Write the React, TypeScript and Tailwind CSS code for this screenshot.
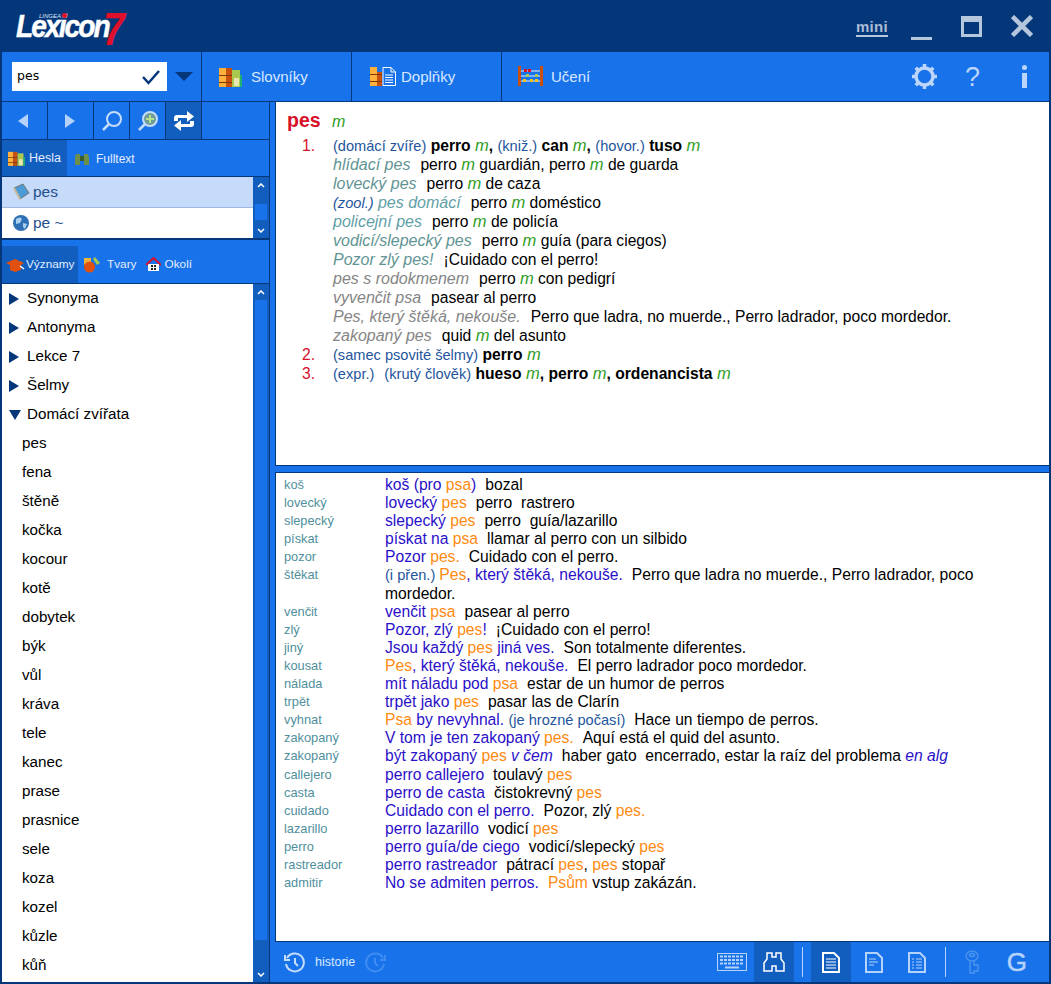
// Lexicon 7 dictionary window
import type { ReactNode } from "react";

const tree = ["pes", "fena", "štěně", "kočka", "kocour", "kotě", "dobytek", "býk", "vůl", "kráva", "tele", "kanec", "prase", "prasnice", "sele", "koza", "kozel", "kůzle", "kůň"];

function M() {
	return <i className="text-[16.500px] text-[#2f9e1f]">m</i>;
}

function Books({ small }: { small?: boolean }) {
	return (
		<svg width={small ? 17 : 23} height={small ? 15 : 20} viewBox="0 0 23 20">
			<rect x="0" y="1" width="7" height="19" fill="#ffb03a" />
			<rect x="7" y="1" width="6" height="19" fill="#c9500f" />
			<rect x="0" y="8" width="13" height="1" fill="#7a3a0a" />
			<rect x="0" y="15" width="13" height="1" fill="#7a3a0a" />
			<rect x="13" y="3" width="8" height="17" fill="#a8c84e" />
			<rect x="15" y="11" width="5" height="8" fill="#e8e8b0" />
			<rect x="21" y="8" width="2" height="12" fill="#1eb070" />
		</svg>
	);
}

function BooksDoc() {
	return (
		<svg width="26" height="20" viewBox="0 0 26 20">
			<rect x="0" y="0" width="7" height="19" fill="#ffb03a" />
			<rect x="7" y="5" width="5" height="14" fill="#c9500f" />
			<rect x="0" y="7" width="12" height="1" fill="#7a3a0a" />
			<rect x="0" y="14" width="12" height="1" fill="#7a3a0a" />
			<path d="M13 .5h8l4.500 4.500V18.500H13z" fill="#1873eb" stroke="#fff" />
			<path d="M21 .5V5h4.500" fill="none" stroke="#fff" />
			<path d="M15 8h8M15 10.500h8M15 13h8M15 15.500h8" stroke="#fff" />
		</svg>
	);
}

function Abacus() {
	return (
		<svg width="26" height="21" viewBox="0 0 26 21">
			<rect x="0" y="0" width="3" height="20" fill="#c9500f" />
			<rect x="22" y="0" width="3" height="20" fill="#c9500f" />
			<path d="M3 5h19M3 10h19M3 15h19" stroke="#e8f0ff" />
			<rect x="6" y="3" width="3" height="3" fill="#e0102a" />
			<rect x="10" y="3" width="3" height="3" fill="#e0102a" />
			<rect x="8" y="8" width="3" height="3" fill="#a8c84e" />
			<rect x="17" y="8" width="3" height="3" fill="#a8c84e" />
			<rect x="5" y="13" width="3" height="3" fill="#f5c518" />
			<rect x="12" y="13" width="3" height="3" fill="#f5c518" />
			<rect x="17" y="13" width="3" height="3" fill="#f5c518" />
		</svg>
	);
}

function Magnifier({ plus }: { plus?: boolean }) {
	return (
		<svg width="22" height="22" viewBox="0 0 22 22" fill="none">
			<circle cx="13" cy="9" r="7" stroke="#c5dcfb" strokeWidth="2" fill={plus ? "#6f9e9a" : "none"} />
			<path d="M8 14l-6 6" stroke="#c5dcfb" strokeWidth="2.500" />
			{plus && <path d="M13 5v8M9 9h8" stroke="#b8e08a" strokeWidth="2" />}
		</svg>
	);
}

function Repeat() {
	return (
		<svg width="20" height="20" viewBox="0 0 20 20" fill="#fff">
			<path d="M0 10V7a3 3 0 0 1 3-3h10V0l7 5.500L13 11V7H4v3z" />
			<path d="M20 10v3a3 3 0 0 1-3 3H7v4L0 14.500 7 9v4h9v-3z" />
		</svg>
	);
}

function ScrollBtn({ down }: { down?: boolean }) {
	return (
		<div className="h-[16px] flex items-center justify-center bg-[#115ebf]">
			<svg width="8" height="5" viewBox="0 0 8 5" fill="none" className={down ? "" : "rotate-180"}>
				<path d="M1 1l3 3 3-3" stroke="#fff" strokeWidth="1.500" />
			</svg>
		</div>
	);
}

function Scrollbar({ thumbTop, thumbHeight }: { thumbTop: number; thumbHeight: number }) {
	return (
		<div className="w-[16px] shrink-0 bg-[#115ebf] flex flex-col justify-between">
			<ScrollBtn />
			<div className="flex-1 px-[2px]" style={{ paddingTop: thumbTop }}>
				<div className="bg-[#1873eb]" style={{ height: thumbHeight }} />
			</div>
			<ScrollBtn down />
		</div>
	);
}

function TopTab({ icon, label, last }: { icon: ReactNode; label: string; last?: boolean }) {
	return (
		<div className={`w-[150px] h-full flex items-center pl-[16px] ${last ? "" : "border-r border-[#04367a]"}`}>
			<div className="w-[33px] flex items-center">{icon}</div>
			<span className="text-[15px] mt-[2px] text-[#d8e8ff]">{label}</span>
		</div>
	);
}

function NavBtn({ w, active, children }: { w: string; active?: boolean; children: ReactNode }) {
	return <div className={`${w} h-full flex items-center justify-center border-r border-[#04367a] ${active ? "bg-[#115ebf]" : ""}`}>{children}</div>;
}

function Row({ label, children }: { label: string; children: ReactNode }) {
	return (
		<div className="flex leading-[18.100px]">
			<div className="w-[101px] shrink-0 text-[12.800px] text-[#4f8f9c]">{label}</div>
			<div className="flex-1 text-black">{children}</div>
		</div>
	);
}

function B({ children }: { children: ReactNode }) {
	return <span className="text-[#2a10c8]">{children}</span>;
}
function O({ children }: { children: ReactNode }) {
	return <span className="text-[#ff8a10]">{children}</span>;
}
function Tr({ children }: { children: ReactNode }) {
	return <span className="ml-[9px]">{children}</span>;
}
function Sub({ color, text, children }: { color: string; text: string; children: ReactNode }) {
	return (
		<div className="h-[19px]">
			<i className={`text-[16px] ${color}`}>{text}</i>
			<span className="ml-[10px]">{children}</span>
		</div>
	);
}
function Note({ children }: { children: ReactNode }) {
	return <span className="text-[14.600px] text-[#24559c]">{children}</span>;
}
function Num({ n }: { n: string }) {
	return <div className="w-[46px] pl-[15px] shrink-0 text-[#d8102a]">{n}</div>;
}

function Doc({ lines, stroke }: { lines: string; stroke: string }) {
	return (
		<svg width="18" height="21" viewBox="0 0 18 21" fill="none">
			<path d="M1 1h11l5 5v14H1z" stroke={stroke} strokeWidth="2" />
			<path d={lines} stroke={stroke} strokeWidth="1.200" />
		</svg>
	);
}

export default function App() {
	return (
		<div className="w-[1051px] h-[984px] flex flex-col overflow-hidden bg-[#04367a] font-['Liberation_Sans',sans-serif] text-[15.650px]">
			{/* Title bar */}
			<div className="h-[52px] shrink-0 flex items-center pl-[16px] pr-[18px] text-[#b5c7dc]">
				<div className="relative w-[118px] h-[36px] text-white italic font-bold">
					<span className="absolute left-0 top-[5px] text-[32px] leading-[26px] tracking-[-2.200px] origin-left scale-x-[0.88] [-webkit-text-stroke:0.5px_white]">Lexicon</span>
					<span className="absolute left-[23px] top-[5px] text-[6px] leading-[6px] font-normal text-[#dfe7f2]">LINGEA</span>
					<span className="absolute left-[46px] top-[5px] size-[5px] rounded-full bg-[#e0102a]" />
					<span className="absolute left-[87px] top-[-2px] text-[46px] leading-[46px] origin-left scale-x-[0.85] text-[#e0102a]">7</span>
				</div>
				<div className="flex-1" />
				<span className="text-[15px] leading-[17px] tracking-[0.300px] font-bold border-b-2 border-[#b5c7dc] mr-[23px] mt-[2px] text-[#a9bdd6]">mini</span>
				<div className="w-[21px] h-[3px] bg-[#b5c7dc] mt-[24px] mr-[29px]" />
				<div className="size-[21px] border-[3px] border-t-[6px] border-[#b5c7dc] mr-[29px]" />
				<svg width="22" height="22" viewBox="0 0 22 22" stroke="#b5c7dc" strokeWidth="4.500"><path d="M1.500 1.500l19 19M20.500 1.500l-19 19" /></svg>
			</div>

			{/* Main toolbar */}
			<div className="h-[50px] shrink-0 ml-[2px] mr-[2px] flex items-center bg-[#1873eb] border-b border-[#04367a]">
				<div className="w-[200px] h-full border-r border-[#04367a] flex items-center pl-[10px]">
					<div className="w-[155px] h-[29px] bg-white flex items-center justify-between pl-[5px] pr-[6px]">
						<span className="text-[12.500px] font-['DejaVu_Sans',sans-serif] text-black">pes</span>
						<svg width="20" height="16" viewBox="0 0 20 16" fill="none"><path d="M2 8l5.500 6L18 2" stroke="#04367a" strokeWidth="2.500" /></svg>
					</div>
					<svg width="18" height="9" viewBox="0 0 18 9" className="ml-[8px]"><path d="M0 0h18L9 9z" fill="#04367a" /></svg>
				</div>
				<TopTab icon={<span className="ml-px"><Books /></span>} label="Slovníky" />
				<TopTab icon={<span className="ml-[2px]"><BooksDoc /></span>} label="Doplňky" />
				<TopTab icon={<Abacus />} label="Učení" last />
				<div className="flex-1 flex items-center justify-end pr-[22px] text-[#bcd6fb]">
					<svg width="25" height="25" viewBox="0 0 25 25" fill="none" className="mr-[28px]">
						<circle cx="12.500" cy="12.500" r="8.500" stroke="#bcd6fb" strokeWidth="3.500" />
						<path d="M12.500 0v4M12.500 21v4M0 12.500h4M21 12.500h4M3.700 3.700l2.800 2.800M18.500 18.500l2.800 2.800M21.300 3.700l-2.800 2.800M6.500 18.500l-2.800 2.800" stroke="#bcd6fb" strokeWidth="3.500" />
					</svg>
					<span className="text-[27px] leading-[26px] mr-[42px]">?</span>
					<div className="flex flex-col items-center gap-[3px]">
						<div className="size-[5px] rounded-full bg-[#bcd6fb]" />
						<div className="w-[5px] h-[15px] bg-[#bcd6fb]" />
					</div>
				</div>
			</div>

			{/* Body */}
			<div className="flex-1 min-h-0 ml-[2px] mr-[2px] mb-[2px] flex bg-[#1873eb]">
				{/* Left column */}
				<div className="w-[268px] shrink-0 flex flex-col border-r border-[#04367a]">
					<div className="h-[38px] shrink-0 flex items-center border-b border-[#04367a]">
						<NavBtn w="w-[46px]"><svg width="12" height="14" viewBox="0 0 12 14" className="-ml-[3px]"><path d="M11 0v14L1 7z" fill="#b5d2fa" /></svg></NavBtn>
						<NavBtn w="w-[46px]"><svg width="12" height="14" viewBox="0 0 12 14"><path d="M0 0v14l10-7z" fill="#b5d2fa" /></svg></NavBtn>
						<NavBtn w="w-[36px]"><Magnifier /></NavBtn>
						<NavBtn w="w-[36px]"><Magnifier plus /></NavBtn>
						<NavBtn w="w-[36px]" active><Repeat /></NavBtn>
					</div>
					<div className="h-[37px] shrink-0 flex items-center border-b border-[#04367a] text-[12px] text-[#e4eeff]">
						<div className="w-[65px] h-full bg-[#115ebf] flex items-center pl-[6px] gap-[4px]"><Books small /><span className="text-[12.500px] mt-px">Hesla</span></div>
						<div className="flex items-center pl-[8px] gap-[7px]">
							<svg width="14" height="14" viewBox="0 0 14 14" fill="#6d8f4a"><path d="M1 3h4v11H0V6zM9 3h4l1 3v8H9z" /><rect x="5" y="5" width="4" height="5" fill="#3c5a2a" /></svg>
							<span className="mt-px">Fulltext</span>
						</div>
					</div>
					<div className="h-[63px] shrink-0 flex border-b-2 border-[#04367a]">
						<div className="flex-1 bg-white text-[#24508c] text-[15.500px]">
							<div className="h-[31px] bg-[#c6dafa] flex items-center pl-[10px] gap-[3px] border-b border-[#04367a]/20">
								<svg width="18" height="18" viewBox="0 0 18 18"><path d="M2 5l9-4 6 9-9 6z" fill="#4d9bd6" stroke="#777" /><path d="M2 5l6 11" stroke="#c8b898" strokeWidth="2" /></svg>
								<span>pes</span>
							</div>
							<div className="h-[30px] flex items-center pl-[10px] gap-[3px]">
								<svg width="18" height="18" viewBox="0 0 18 18"><circle cx="9" cy="9" r="8" fill="#2f6fb5" /><path d="M4 5q4-3 6 0l-2 4-4 1zM11 9l4 1-2 5-2-2z" fill="#a8d0ef" /></svg>
								<span>pe ~</span>
							</div>
						</div>
						<Scrollbar thumbTop={11} thumbHeight={16} />
					</div>
					<div className="h-[6px] shrink-0" />
					<div className="h-[38px] shrink-0 flex items-center border-b border-[#04367a] text-[11.800px] text-[#e4eeff]">
						<div className="w-[76px] h-full bg-[#115ebf] flex items-center pl-[4px] gap-px">
							<svg width="19" height="14" viewBox="0 0 19 14"><path d="M0 5l9-4 9 4-3 2v5l-6 2-5-2V7z" fill="#e0500f" /><path d="M14 8l4 3" stroke="#fff" strokeWidth="1.500" /></svg>
							<span className="mt-px">Významy</span>
						</div>
						<div className="flex items-center pl-[6px] gap-[7px]">
							<svg width="16" height="16" viewBox="0 0 16 16"><rect x="0" y="1" width="7" height="7" fill="#f4b43a" /><path d="M11 0l5 6-3 2-4-6z" fill="#a8c84e" /><circle cx="5.500" cy="10" r="5.500" fill="#e0500f" /></svg>
							<span className="mt-px">Tvary</span>
						</div>
						<div className="flex items-center pl-[9px] gap-[4px]">
							<svg width="15" height="15" viewBox="0 0 15 15"><path d="M2 7v7h11V7z" fill="#fff" /><path d="M0 8l7.500-7L15 8" fill="none" stroke="#d8102a" strokeWidth="2" /><rect x="5" y="8" width="2" height="2" fill="#222" /><rect x="8" y="8" width="2" height="2" fill="#222" /><rect x="5" y="11" width="2" height="2" fill="#222" /><rect x="8" y="11" width="2" height="2" fill="#222" /></svg>
							<span className="mt-px">Okolí</span>
						</div>
					</div>
					<div className="flex-1 min-h-0 flex">
						<div className="flex-1 bg-white text-black text-[15.200px] overflow-hidden">
							{["Synonyma", "Antonyma", "Lekce 7", "Šelmy"].map((t) => (
								<div key={t} className="h-[29px] flex items-center pl-[7px] gap-[8px]">
									<svg width="10" height="12" viewBox="0 0 10 12"><path d="M0 0l10 6-10 6z" fill="#04367a" /></svg>
									<span>{t}</span>
								</div>
							))}
							<div className="h-[29px] flex items-center pl-[7px] gap-[6px]">
								<svg width="12" height="10" viewBox="0 0 12 10"><path d="M0 0h12L6 10z" fill="#04367a" /></svg>
								<span>Domácí zvířata</span>
							</div>
							{tree.map((t) => (
								<div key={t} className="h-[29px] flex items-center pl-[20px]">{t}</div>
							))}
						</div>
						<Scrollbar thumbTop={0} thumbHeight={640} />
					</div>
				</div>

				{/* Right column */}
				<div className="flex-1 min-w-0 flex flex-col pl-[5px]">
					<div className="h-[364px] shrink-0 bg-white border-l border-b border-[#04367a] pl-[11px] pt-[5px] text-black leading-[19px]">
						<div className="flex items-baseline h-[26px] text-[19.500px] leading-[26px]">
							<b className="w-[45px] text-[#d8102a]">pes</b>
							<i className="text-[16px] text-[#2f9e1f]">m</i>
						</div>
						<div className="mt-[3px]">
							<div className="flex">
								<Num n="1." />
								<div>
									<div className="h-[19px]"><Note>(domácí zvíře)</Note> <b>perro</b> <M /><b>,</b> <Note>(kniž.)</Note> <b>can</b> <M /><b>,</b> <Note>(hovor.)</Note> <b>tuso</b> <M /></div>
									<Sub color="text-[#5f9494]" text="hlídací pes">perro <M /> guardián, perro <M /> de guarda</Sub>
									<Sub color="text-[#5f9494]" text="lovecký pes">perro <M /> de caza</Sub>
									<div className="h-[19px]"><i className="text-[14.600px] text-[#24559c]">(zool.)</i> <i className="text-[16px] text-[#5f9fa8]">pes domácí</i><span className="ml-[10px]">perro <M /> doméstico</span></div>
									<Sub color="text-[#5f9fa8]" text="policejní pes">perro <M /> de policía</Sub>
									<Sub color="text-[#5f9494]" text="vodicí/slepecký pes">perro <M /> guía (para ciegos)</Sub>
									<Sub color="text-[#5f9494]" text="Pozor zlý pes!">¡Cuidado con el perro!</Sub>
									<Sub color="text-[#858585]" text="pes s rodokmenem">perro <M /> con pedigrí</Sub>
									<Sub color="text-[#858585]" text="vyvenčit psa">pasear al perro</Sub>
									<Sub color="text-[#858585]" text="Pes, který štěká, nekouše.">Perro que ladra, no muerde., Perro ladrador, poco mordedor.</Sub>
									<Sub color="text-[#858585]" text="zakopaný pes">quid <M /> del asunto</Sub>
								</div>
							</div>
							<div className="flex h-[19px]">
								<Num n="2." />
								<div><Note>(samec psovité šelmy)</Note> <b>perro</b> <M /></div>
							</div>
							<div className="flex h-[19px]">
								<Num n="3." />
								<div><Note>(expr.)</Note><Note><span className="ml-[10px]">(krutý člověk)</span></Note> <b>hueso</b> <M /><b>,</b> <b>perro</b> <M /><b>,</b> <b>ordenancista</b> <M /></div>
							</div>
						</div>
					</div>
					<div className="h-[6px] shrink-0" />
					<div className="h-[470px] shrink-0 bg-white border-l border-t border-b border-[#04367a] pl-[8px] pr-[20px] pt-[3px]">
						<Row label="koš"><B>koš (pro </B><O>psa</O><B>)</B><Tr>bozal</Tr></Row>
						<Row label="lovecký"><B>lovecký </B><O>pes</O><Tr>perro&nbsp; rastrero</Tr></Row>
						<Row label="slepecký"><B>slepecký </B><O>pes</O><Tr>perro&nbsp; guía/lazarillo</Tr></Row>
						<Row label="pískat"><B>pískat na </B><O>psa</O><Tr>llamar al perro con un silbido</Tr></Row>
						<Row label="pozor"><B>Pozor </B><O>pes.</O><Tr>Cuidado con el perro.</Tr></Row>
						<Row label="štěkat"><Note>(i přen.) </Note><O>Pes</O><B>, který štěká, nekouše.</B><Tr>Perro que ladra no muerde., Perro ladrador, poco mordedor.</Tr></Row>
						<Row label="venčit"><B>venčit </B><O>psa</O><Tr>pasear al perro</Tr></Row>
						<Row label="zlý"><B>Pozor, zlý </B><O>pes</O><B>!</B><Tr>¡Cuidado con el perro!</Tr></Row>
						<Row label="jiný"><B>Jsou každý </B><O>pes</O><B> jiná ves.</B><Tr>Son totalmente diferentes.</Tr></Row>
						<Row label="kousat"><O>Pes</O><B>, který štěká, nekouše.</B><Tr>El perro ladrador poco mordedor.</Tr></Row>
						<Row label="nálada"><B>mít náladu pod </B><O>psa</O><Tr>estar de un humor de perros</Tr></Row>
						<Row label="trpět"><B>trpět jako </B><O>pes</O><Tr>pasar las de Clarín</Tr></Row>
						<Row label="vyhnat"><O>Psa</O><B> by nevyhnal.</B> <Note>(je hrozné počasí)</Note><Tr>Hace un tiempo de perros.</Tr></Row>
						<Row label="zakopaný"><B>V tom je ten zakopaný </B><O>pes.</O><Tr>Aquí está el quid del asunto.</Tr></Row>
						<Row label="zakopaný"><B>být zakopaný </B><O>pes</O><B> <i>v čem</i></B><Tr>haber gato&nbsp; encerrado, estar la raíz del problema <i className="text-[#2a10c8]">en alg</i></Tr></Row>
						<Row label="callejero"><B>perro callejero</B><Tr>toulavý <O>pes</O></Tr></Row>
						<Row label="casta"><B>perro de casta</B><Tr>čistokrevný <O>pes</O></Tr></Row>
						<Row label="cuidado"><B>Cuidado con el perro.</B><Tr>Pozor, zlý <O>pes.</O></Tr></Row>
						<Row label="lazarillo"><B>perro lazarillo</B><Tr>vodicí <O>pes</O></Tr></Row>
						<Row label="perro"><B>perro guía/de ciego</B><Tr>vodicí/slepecký <O>pes</O></Tr></Row>
						<Row label="rastreador"><B>perro rastreador</B><Tr>pátrací <O>pes</O>, <O>pes</O> stopař</Tr></Row>
						<Row label="admitir"><B>No se admiten perros.</B><Tr><O>Psům</O> vstup zakázán.</Tr></Row>
					</div>

					{/* Bottom toolbar */}
					<div className="flex-1 min-h-0 flex items-center pl-[9px] text-[12.500px] text-[#d8e8ff]">
						<svg width="21" height="21" viewBox="0 0 21 21" fill="none" stroke="#c5dcfb" strokeWidth="2">
							<path d="M3 6a9 9 0 1 1-1 6" /><path d="M1 3v5h5" /><path d="M11 6v5l3 3" />
						</svg>
						<span className="ml-[10px]">historie</span>
						<svg width="21" height="21" viewBox="0 0 21 21" fill="none" stroke="#3f8df0" strokeWidth="2" className="ml-[10px]">
							<path d="M18 6a9 9 0 1 0 1 6" /><path d="M20 3v5h-5" /><path d="M10 6v5l3 3" />
						</svg>
						<div className="flex-1" />
						<svg width="30" height="18" viewBox="0 0 30 18" className="mr-[7px]">
							<rect x=".5" y=".5" width="29" height="17" fill="none" stroke="#b5d2fa" />
							<path d="M3 3.500h24M3 7h24M3 10.500h24" stroke="#b5d2fa" strokeWidth="2" strokeDasharray="3 1" />
							<path d="M8 14.500h14" stroke="#b5d2fa" strokeWidth="2" />
						</svg>
						<div className="w-[40px] h-[40px] bg-[#115ebf] flex items-center justify-center">
							<svg width="22" height="22" viewBox="0 0 22 22" fill="none" stroke="#fff" strokeWidth="1.500">
								<path d="M4 2h5v4h4V2h5v6l3 4v8h-8v-5H9v5H1v-8l3-4z" />
							</svg>
						</div>
						<div className="w-px h-[30px] bg-[#b5d2fa] ml-[8px] mr-[8px]" />
						<div className="w-[40px] h-[40px] bg-[#115ebf] flex items-center justify-center">
							<Doc stroke="#fff" lines="M4 7h10M4 10h10M4 13h10M4 16h10" />
						</div>
						<div className="ml-[14px]"><Doc stroke="#b5d2fa" lines="M4 7h7M4 10h9M4 13h5" /></div>
						<div className="ml-[25px]"><Doc stroke="#b5d2fa" lines="M4 7h2M8 7h6M4 10h2M8 10h6M4 13h2M8 13h6M4 16h2M8 16h6" /></div>
						<div className="w-px h-[30px] bg-[#b5d2fa] ml-[19px] mr-[19px]" />
						<svg width="16" height="24" viewBox="0 0 16 24" fill="none" stroke="#4a92ee" strokeWidth="1.500">
							<ellipse cx="7" cy="6" rx="6" ry="5" /><ellipse cx="7" cy="5" rx="2.500" ry="1.500" /><path d="M5 11v12h4v-2h4v-6H9v-4" />
						</svg>
						<span className="ml-[26px] mr-[22px] text-[26px] leading-[25px] text-[#b5d2fa] [-webkit-text-stroke:0.5px_#b5d2fa]">G</span>
					</div>
				</div>
			</div>
		</div>
	);
}
